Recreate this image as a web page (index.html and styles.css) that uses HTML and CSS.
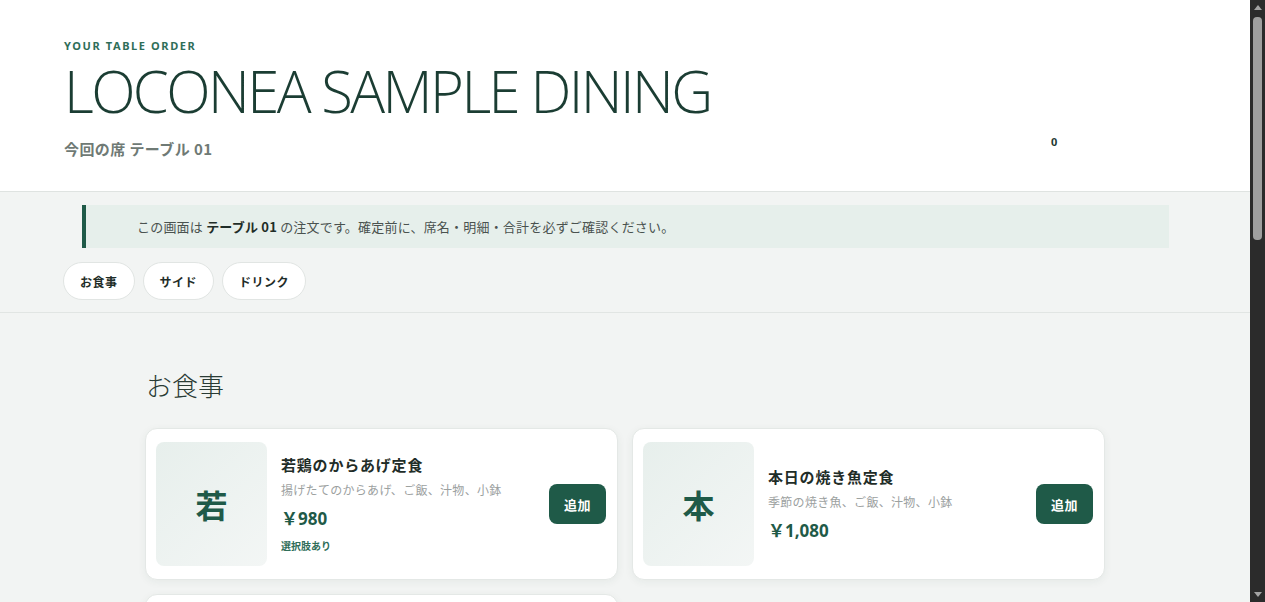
FILE: index.html
```html
<!DOCTYPE html>
<html lang="ja">
<head>
<meta charset="utf-8">
<title>LOCONEA SAMPLE DINING</title>
<link rel="stylesheet" href="styles.css">
</head>
<body>
<header class="site-header">
  <div class="header-main">
    <p class="eyebrow">YOUR TABLE ORDER</p>
    <h1 class="title">LOCONEA SAMPLE DINING</h1>
    <p class="seat">今回の席 テーブル 01</p>
  </div>
  <div class="cart">
    <span class="cart-count">0</span>
  </div>
</header>

<div class="toolbar">
  <div class="notice">この画面は <strong>テーブル 01</strong> の注文です。確定前に、席名・明細・合計を必ずご確認ください。</div>
  <nav class="tabs">
    <button class="tab">お食事</button>
    <button class="tab">サイド</button>
    <button class="tab">ドリンク</button>
  </nav>
</div>

<main class="menu">
  <section class="category">
    <h2 class="category-title">お食事</h2>
    <div class="grid">
      <article class="card">
        <div class="thumb">若</div>
        <div class="info">
          <h3 class="name">若鶏のからあげ定食</h3>
          <p class="desc">揚げたてのからあげ、ご飯、汁物、小鉢</p>
          <p class="price">￥980</p>
          <p class="opt">選択肢あり</p>
        </div>
        <button class="add">追加</button>
      </article>
      <article class="card">
        <div class="thumb">本</div>
        <div class="info">
          <h3 class="name">本日の焼き魚定食</h3>
          <p class="desc">季節の焼き魚、ご飯、汁物、小鉢</p>
          <p class="price">￥1,080</p>
        </div>
        <button class="add">追加</button>
      </article>
      <article class="card">
        <div class="thumb">豚</div>
        <div class="info">
          <h3 class="name">豚の生姜焼き定食</h3>
          <p class="desc">生姜焼き、ご飯、汁物、小鉢</p>
          <p class="price">￥1,000</p>
        </div>
        <button class="add">追加</button>
      </article>
    </div>
  </section>
  <section class="category">
    <h2 class="category-title">サイド</h2>
    <div class="grid">
      <article class="card">
        <div class="thumb">枝</div>
        <div class="info">
          <h3 class="name">枝豆</h3>
          <p class="desc">塩ゆでの枝豆</p>
          <p class="price">￥380</p>
        </div>
        <button class="add">追加</button>
      </article>
      <article class="card">
        <div class="thumb">ポ</div>
        <div class="info">
          <h3 class="name">ポテトフライ</h3>
          <p class="desc">揚げたてのフライドポテト</p>
          <p class="price">￥450</p>
        </div>
        <button class="add">追加</button>
      </article>
    </div>
  </section>
  <section class="category">
    <h2 class="category-title">ドリンク</h2>
    <div class="grid">
      <article class="card">
        <div class="thumb">烏</div>
        <div class="info">
          <h3 class="name">烏龍茶</h3>
          <p class="desc">冷たい烏龍茶</p>
          <p class="price">￥300</p>
        </div>
        <button class="add">追加</button>
      </article>
      <article class="card">
        <div class="thumb">生</div>
        <div class="info">
          <h3 class="name">生ビール</h3>
          <p class="desc">中ジョッキ</p>
          <p class="price">￥580</p>
          <p class="opt">選択肢あり</p>
        </div>
        <button class="add">追加</button>
      </article>
    </div>
  </section>
</main>

<div class="scrollbar" aria-hidden="true">
  <span class="sb-up"></span>
  <span class="sb-thumb"></span>
  <span class="sb-down"></span>
</div>
</body>
</html>
```

FILE: styles.css
```css
* { box-sizing: border-box; }
html, body { margin: 0; padding: 0; }
body {
  background: #f2f4f3;
  font-family: "Noto Sans", "Noto Sans CJK JP", sans-serif;
  color: #1f2d28;
  padding-right: 15px;
}
p, h1, h2, h3 { margin: 0; }

/* scrollbar look of the captured browser window */
.scrollbar {
  position: fixed;
  top: 0;
  right: 0;
  width: 15px;
  height: 100vh;
  background: #2b2b2b;
  display: flex;
  flex-direction: column;
  align-items: center;
}
.sb-up, .sb-down {
  width: 0;
  height: 0;
  border-left: 4px solid transparent;
  border-right: 4px solid transparent;
}
.sb-up {
  border-bottom: 5px solid #a3a3a3;
  margin-top: 5px;
}
.sb-thumb {
  width: 9px;
  height: 223px;
  margin-top: 7px;
  background: #9f9f9f;
  border-radius: 4px;
}
.sb-down {
  border-top: 5px solid #a3a3a3;
  margin-top: auto;
  margin-bottom: 5px;
}

.site-header {
  background: #fff;
  border-bottom: 1px solid #dfe3e1;
  display: flex;
  justify-content: space-between;
  align-items: flex-start;
  padding: 39px 64px 22px;
}
.eyebrow {
  font-size: 11px;
  font-weight: 700;
  letter-spacing: 1.6px;
  color: #2f6e59;
  line-height: 14px;
}
.title {
  font-family: "Open Sans", "Roboto", sans-serif;
  font-stretch: 100%;
  font-weight: 300;
  font-size: 58px;
  line-height: 64px;
  color: #1b3d33;
  margin-top: 6px;
  letter-spacing: -2.6px;
}
.seat {
  font-family: "Noto Sans CJK JP", sans-serif;
  font-size: 15px;
  font-weight: 700;
  color: #6f7a75;
  margin-top: 15px;
  line-height: 22px;
  letter-spacing: 0.4px;
}
.cart {
  position: relative;
  width: 135px;
  height: 40px;
  margin-top: 90px;
}
.cart-count {
  position: absolute;
  left: 0;
  top: 5px;
  font-size: 11px;
  font-weight: 700;
  color: #1f3a33;
}

.toolbar {
  padding: 13px 64px 12px;
  border-bottom: 1px solid #e1e5e3;
}
.notice {
  margin: 0 17px 0 18px;
  background: #e6efeb;
  border-left: 4px solid #1f5a48;
  padding: 11px 51px;
  font-family: "Noto Sans CJK JP", sans-serif;
  font-size: 13px;
  line-height: 21px;
  color: #4a524f;
  letter-spacing: 0.2px;
}
.notice strong { color: #1f2d28; font-weight: 700; }
.tabs {
  display: flex;
  gap: 8px;
  margin-top: 14px;
  margin-left: -1px;
}
.tab {
  font-family: "Noto Sans CJK JP", sans-serif;
  background: #fff;
  border: 1px solid #e1e5e3;
  border-radius: 19px;
  height: 38px;
  padding: 0 16px;
  font-size: 12px;
  font-weight: 700;
  color: #1f2d28;
  letter-spacing: 0.5px;
}

.menu {
  max-width: 960px;
  margin: 0 auto;
  padding: 54px 0 40px;
}
.category + .category { margin-top: 48px; }
.category-title {
  font-family: "Noto Sans CJK JP", sans-serif;
  font-weight: 300;
  font-size: 26px;
  line-height: 36px;
  color: #2a3b35;
  margin-left: 1px;
}
.grid {
  display: grid;
  grid-template-columns: 1fr 1fr;
  gap: 14px;
  margin-top: 25px;
}
.card {
  background: #fff;
  border: 1px solid #e4e8e6;
  border-radius: 12px;
  box-shadow: 0 2px 8px rgba(30, 60, 50, 0.06);
  padding: 12px 11px 12px 10px;
  display: flex;
  align-items: center;
  gap: 14px;
  min-height: 152px;
}
.thumb {
  flex: 0 0 111px;
  height: 124px;
  border-radius: 8px;
  background: linear-gradient(135deg, #e7efec, #f3f6f5);
  display: flex;
  align-items: center;
  justify-content: center;
  font-family: "Noto Sans CJK JP", sans-serif;
  font-size: 32px;
  font-weight: 700;
  color: #1f5a48;
}
.info {
  flex: 1;
  font-family: "Noto Sans CJK JP", sans-serif;
}
.name {
  font-size: 15px;
  font-weight: 700;
  line-height: 22px;
  color: #1f2d28;
  letter-spacing: 0.8px;
}
.desc {
  font-size: 12px;
  line-height: 18px;
  color: #9ca19f;
  margin-top: 5px;
  letter-spacing: 0.3px;
}
.price {
  font-family: "Noto Sans", "Noto Sans CJK JP", sans-serif;
  font-size: 17px;
  font-weight: 700;
  color: #1f5a48;
  line-height: 24px;
  margin-top: 8px;
}
.opt {
  font-size: 10px;
  font-weight: 700;
  color: #2f6e59;
  line-height: 16px;
  margin-top: 7px;
}
.add {
  flex: 0 0 auto;
  width: 57px;
  height: 40px;
  border: none;
  border-radius: 8px;
  background: #1f5a48;
  color: #fff;
  font-family: "Noto Sans CJK JP", sans-serif;
  font-size: 13px;
  font-weight: 700;
  letter-spacing: 0.5px;
}
```
